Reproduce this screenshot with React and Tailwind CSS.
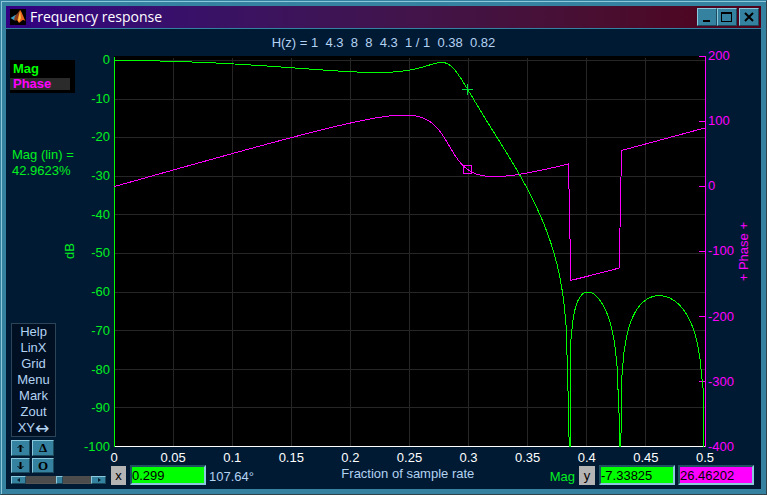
import React from 'react';

const NUM = [1, 4.3, 8, 8, 4.3, 1];
const SAMPLES = 256;
const DC_GAIN = 26.6 / 2.2;

// Response of the filter at frequency f (fraction of the sample rate).
function response(f) {
  const w = 2 * Math.PI * f;
  const amp = NUM.reduce((sum, b, k) => sum + b * Math.cos((2.5 - k) * w), 0);
  const re = Math.cos(2 * w) + 0.38 * Math.cos(w) + 0.82;
  const im = Math.sin(2 * w) + 0.38 * Math.sin(w);
  const mag = Math.abs(amp) / Math.hypot(re, im) / DC_GAIN;
  let den = (Math.atan2(im, re) * 180) / Math.PI;
  if (w > Math.PI / 2 && den <= 0) den += 360;
  const phase = 900 * f - den - (amp < 0 ? 180 : 0);
  return { db: 20 * Math.log10(Math.max(mag, 1e-6)), phase, amp };
}

const points = Array.from({ length: SAMPLES }, (_, k) => {
  const f = k / (2 * SAMPLES);
  return { x: 0.5 + 1180 * f, ...response(f) };
});

// The magnitude falls to the floor of the plot at each zero of the response.
const magPoints = points.flatMap((p, i) => {
  const prev = points[i - 1];
  if (!prev || prev.amp * p.amp > 0) return [p];
  const mid = (prev.x + p.x) / 2;
  return [{ x: mid - 0.5, db: -100 }, { x: mid + 0.5, db: -100 }, p];
});
magPoints.push({ x: 589.5, db: -86 }, { x: 589.5, db: -100 });

const magLine = magPoints.map((p) => `${p.x.toFixed(2)},${(4.5 - 3.86 * p.db).toFixed(2)}`).join(' ');
const phaseLine = [...points, { x: 591, phase: 90 }]
  .map((p) => `${p.x.toFixed(2)},${(130.5 - 0.65 * p.phase).toFixed(2)}`)
  .join(' ');

const dbTicks = [0, -10, -20, -30, -40, -50, -60, -70, -80, -90, -100];
const phaseTicks = [200, 100, 0, -100, -200, -300, -400];
const freqTicks = [0, 0.05, 0.1, 0.15, 0.2, 0.25, 0.3, 0.35, 0.4, 0.45, 0.5];
const menu = ['Help', 'LinX', 'Grid', 'Menu', 'Mark', 'Zout'];

const raised =
  'flex items-center justify-center bg-[#3482a0] border border-t-[#8cc8dc] border-l-[#8cc8dc] border-b-[#1c4a5c] border-r-[#1c4a5c] text-black';
const field =
  'h-5 w-[76px] min-w-0 border-2 border-t-[#1f5060] border-l-[#1f5060] border-b-[#8cc8dc] border-r-[#8cc8dc] text-black outline-none';

function Plot() {
  return (
    <svg
      className="block h-full w-0 min-w-0 flex-1 bg-black"
      viewBox="0 0 591 391"
      preserveAspectRatio="none"
      shapeRendering="crispEdges"
      fill="none"
      role="img"
      aria-label="Magnitude and phase against frequency"
    >
      <g stroke="#262626">
        {freqTicks.slice(1, -1).map((f) => (
          <line key={f} x1={0.5 + 1180 * f} x2={0.5 + 1180 * f} y1="2" y2="390" />
        ))}
        {dbTicks.slice(0, -1).map((d) => (
          <line key={d} x1="0" x2="591" y1={Math.floor(4.5 - 3.86 * d) + 0.5} y2={Math.floor(4.5 - 3.86 * d) + 0.5} />
        ))}
      </g>
      <line x1="0" x2="591" y1="390.5" y2="390.5" stroke="#fff" />
      <line x1="0.5" x2="0.5" y1="1" y2="391" stroke="#0f0" />
      <g stroke="#f0f">
        {phaseTicks.slice(0, -1).map((p) => (
          <line
            key={p}
            x1="585"
            x2="591"
            y1={Math.floor(130.5 - 0.65 * p) + 0.5}
            y2={Math.floor(130.5 - 0.65 * p) + 0.5}
          />
        ))}
      </g>
      <polyline points={phaseLine} stroke="#f0f" />
      <polyline points={magLine} stroke="#0f0" />
      <path d="M348 33.5h11M353.5 28v11" stroke="#00e040" />
      <rect x="349.5" y="109.5" width="8" height="8" stroke="#f0f" />
    </svg>
  );
}

function TitleBar() {
  return (
    <header className="flex h-[23px] shrink-0 items-center border-b border-[#3482a0] bg-gradient-to-r from-[#320082] to-[#500018] pl-1 pr-0.5">
      <svg className="size-4 bg-black" viewBox="0 0 16 16" aria-hidden="true">
        <path d="M0.5 9l4-2.5 2-1 1.5 3-3.500 3z" fill="#3f9fc8" />
        <path d="M5 7l2-2 3-4-1 7-3 4-2-1.500z" fill="#8a3a1c" />
        <path d="M10 1c1.500 1 3 6 5.500 11-2-1.500-3-1.500-4 0l-2.500 2-2-3c1-2 2-6 3-10z" fill="#e8641c" />
        <path d="M10 2l1 7-2 4-1-2z" fill="#ffc04a" />
      </svg>
      <h1 className="flex-1 truncate pl-1 font-['Open_Sans','Noto_Sans',sans-serif] text-[14px] leading-5 text-white">
        Frequency response
      </h1>
      <button aria-label="Minimize" className={`${raised} h-[18px] w-5`}>
        <svg width="14" height="12" shapeRendering="crispEdges"><path d="M3 10h7" stroke="#000" strokeWidth="2" /></svg>
      </button>
      <button aria-label="Maximize" className={`${raised} h-[18px] w-5`}>
        <svg width="12" height="12" shapeRendering="crispEdges" fill="none" stroke="#000">
          <path d="M0 2h11" strokeWidth="2" /><path d="M0.500 2v8.500h10V2" />
        </svg>
      </button>
      <button aria-label="Close" className={`${raised} ml-0.5 h-[18px] w-5`}>
        <svg width="10" height="10"><path d="M1 1l8 8M9 1l-8 8" stroke="#000" strokeWidth="2" /></svg>
      </button>
    </header>
  );
}

function Sidebar() {
  return (
    <aside className="flex w-[78px] shrink-0 flex-col pb-[5px]">
      <div className="ml-1 mt-1 h-[33px] w-[65px] bg-black text-[13px] font-bold leading-4">
        <button className="block w-full pl-[3px] pt-px text-left text-[#0f0]">Mag</button>
        <button className="mt-px block h-3 w-[60px] bg-[#2b2b2b] pl-[3px] text-left leading-3 text-[#f0f]">Phase</button>
      </div>
      <p className="ml-1.5 mt-[54px] whitespace-nowrap text-[13px] leading-4 text-[#00f020]">
        Mag (lin) =<br />42.9623%
      </p>
      <div className="flex flex-1 items-center justify-end pr-1.5">
        <span className="rotate-180 text-[13px] leading-4 text-[#00f020] [writing-mode:vertical-rl]">dB</span>
      </div>
      <nav className="ml-[5px] flex w-[45px] flex-col border border-[#2c4458] bg-[#001022] text-[13px] leading-4 text-[#b4d2f2]">
        {menu.map((m) => (
          <button key={m} className="h-4 whitespace-nowrap text-center">{m}</button>
        ))}
        <button className="flex h-4 items-center justify-center">
          XY<span className="font-['DejaVu_Sans',sans-serif] text-[17px] leading-4">↔</span>
        </button>
      </nav>
      <div className="ml-[5px] mt-[3px] grid w-[43px] grid-cols-[19px_22px] gap-0.5 font-['Liberation_Serif',serif] text-[13px] font-bold leading-3">
        <button aria-label="Up" className={`${raised} h-4`}>
          <svg width="7" height="8" fill="none" stroke="#000"><path d="M3.5 8V1" strokeWidth="2" /><path d="M0.5 4l3-3 3 3" /></svg>
        </button>
        <button className={`${raised} h-4`}>Δ</button>
        <button aria-label="Down" className={`${raised} h-[15px]`}>
          <svg width="7" height="8" fill="none" stroke="#000"><path d="M3.5 0v7" strokeWidth="2" /><path d="M0.5 4l3 3 3-3" /></svg>
        </button>
        <button aria-label="Circle" className={`${raised} h-[15px]`}>O</button>
      </div>
      <div className="ml-[5px] mt-[3px] flex h-2 w-[95px]">
        <button aria-label="Decrease" className={`${raised} w-[15px]`}>
          <svg width="4" height="4"><path d="M0 2l3-2v4z" fill="#06202c" /></svg>
        </button>
        <input
          type="range"
          aria-label="Line width"
          defaultValue="52"
          className="h-2 w-0 min-w-0 flex-1 appearance-none border-b border-[#555] bg-[#4c4c4c] [&::-webkit-slider-thumb]:h-2 [&::-webkit-slider-thumb]:w-[7px] [&::-webkit-slider-thumb]:appearance-none [&::-webkit-slider-thumb]:border [&::-webkit-slider-thumb]:border-[#8cc8dc] [&::-webkit-slider-thumb]:border-b-[#1c4a5c] [&::-webkit-slider-thumb]:border-r-[#1c4a5c] [&::-webkit-slider-thumb]:bg-[#3482a0]"
        />
        <button aria-label="Increase" className={`${raised} w-[15px]`}>
          <svg width="4" height="4"><path d="M4 2L1 0v4z" fill="#06202c" /></svg>
        </button>
      </div>
    </aside>
  );
}

export default function App() {
  return (
    <div className="flex h-screen min-h-[420px] border border-b-[#30424c] border-l-[#3482a0] border-r-[#30424c] border-t-[#3482a0] bg-[#001a33] font-['Liberation_Sans',Arial,sans-serif]">
      <div className="flex min-w-0 flex-1 border-l border-t border-[#8cc8dc]">
        <div className="flex min-w-0 flex-1 flex-col border-4 border-b-[5px] border-r-[5px] border-[#3482a0]">
          <TitleBar />
          <div className="flex h-[27px] shrink-0 items-center justify-center whitespace-pre text-[13px] leading-4 text-[#b4d2f2]">
            {'H(z) = 1  4.3  8  8  4.3  1 / 1  0.38  0.82'}
          </div>
          <div className="flex min-h-0 flex-1">
            <Sidebar />
            <main className="flex min-w-0 flex-1 flex-col text-[13px] leading-4">
              <div className="flex min-h-0 flex-1">
                <div className="flex w-[30px] flex-col justify-between pr-1 pt-1 text-[#00f020]">
                  {dbTicks.map((d) => (
                    <span key={d} className="flex h-0 items-center justify-end">{d}</span>
                  ))}
                </div>
                <Plot />
                <div className="flex w-14 border-l border-[#f0f] text-[#f0f]">
                  <div className="flex w-[30px] flex-col justify-between pl-0.5">
                    {phaseTicks.map((p) => (
                      <span key={p} className="flex h-0 items-center">{p}</span>
                    ))}
                  </div>
                  <span className="rotate-180 self-center whitespace-nowrap [writing-mode:vertical-rl]">+ Phase +</span>
                </div>
              </div>
              <div className="ml-[30px] mr-[56px] flex h-[18px] items-center justify-between pt-[3px] text-white">
                {freqTicks.map((f) => (
                  <span key={f} className="flex w-0 justify-center">{f}</span>
                ))}
              </div>
              <div className="flex h-6 items-start pl-[27px] pr-[7px]">
                <button className="mt-px h-[19px] w-[15px] bg-[#b4b4b4] text-black">x</button>
                <input aria-label="Frequency" defaultValue="0.299" className={`${field} ml-1 bg-[#0f0]`} />
                <span className="ml-[3px] mt-1 text-[#b4d2f2]">107.64°</span>
                <span className="mt-px flex-1 whitespace-nowrap pl-3 text-center text-[#b4d2f2]">Fraction of sample rate</span>
                <label htmlFor="mag" className="mt-1 text-[#00f020]">Mag</label>
                <button className="ml-1 mt-px h-[19px] w-4 bg-[#b4b4b4] text-black">y</button>
                <input id="mag" defaultValue="-7.33825" className={`${field} ml-1 bg-[#0f0]`} />
                <input aria-label="Phase" defaultValue="26.46202" className={`${field} ml-[3px] bg-[#f0f]`} />
              </div>
            </main>
          </div>
        </div>
      </div>
    </div>
  );
}
